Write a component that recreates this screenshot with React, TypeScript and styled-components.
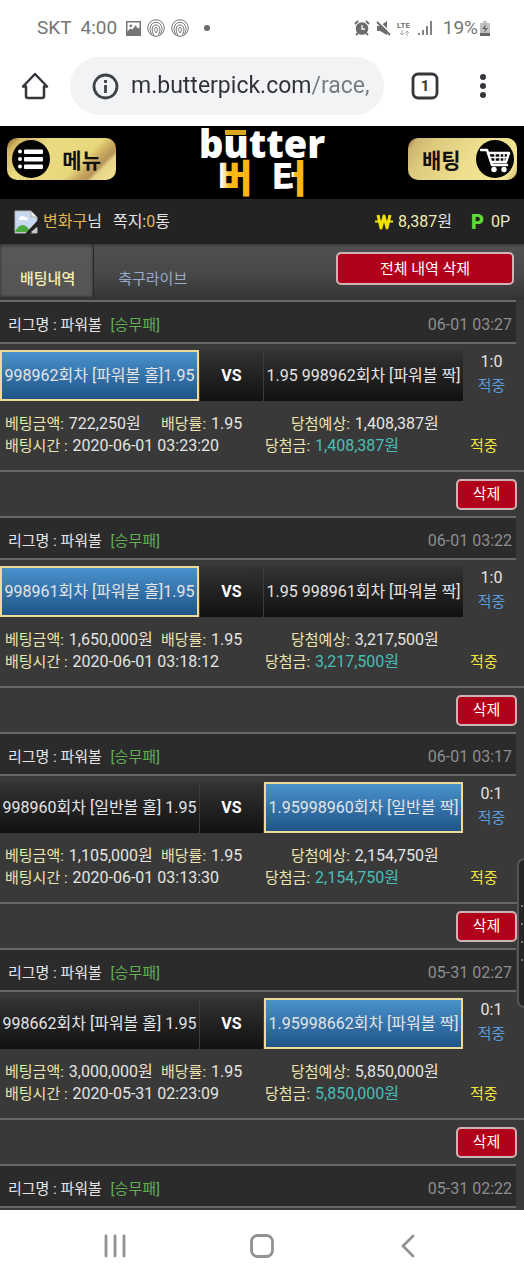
import React from "react";
import styled, { createGlobalStyle, css } from "styled-components";

const GlobalStyle = createGlobalStyle`
  * { box-sizing: border-box; }
  body {
    margin: 0;
    background: #393939;
    font-family: Roboto, "Noto Sans CJK KR", sans-serif;
    font-size: 16px;
    line-height: 22px;
    color: #e4e4e4;
  }
  button { font-family: inherit; cursor: pointer; padding: 0; border: 0; background: none; }
  a { text-decoration: none; color: inherit; }
  svg { display: block; flex: none; }
`;

const Page = styled.div`
  display: flex;
  flex-direction: column;
  min-height: 100vh;
  position: relative;
  overflow-x: hidden;
`;

const StatusBar = styled.div`
  display: flex;
  justify-content: space-between;
  align-items: center;
  height: 56px;
  padding: 0 34px 0 37px;
  background: #fff;
  color: #757575;
  font-size: 19px;
`;

const StatusGroup = styled.div<{ $gap: number }>`
  display: flex;
  align-items: center;
  gap: ${(p) => p.$gap}px;
`;

const StatusText = styled.span<{ $space?: number }>`
  margin-right: ${(p) => p.$space ?? 0}px;
`;

const BrowserBar = styled.div`
  display: flex;
  align-items: center;
  height: 70px;
  padding: 0 37px 10px 20px;
  background: #fff;
`;

const IconButton = styled.button`
  display: flex;
  align-items: center;
  justify-content: center;
  height: 44px;
`;

const AddressBox = styled.label`
  flex: 1;
  min-width: 0;
  display: flex;
  align-items: center;
  gap: 12px;
  height: 58px;
  margin: 0 27px 0 20px;
  padding: 0 12px 0 22px;
  border-radius: 29px;
  background: #f1f3f5;
`;

const AddressInput = styled.input`
  flex: 1;
  min-width: 0;
  height: 36px;
  padding: 0;
  border: 0;
  outline: 0;
  font: 23px/36px Roboto, sans-serif;
  color: #2f3135;
  background: linear-gradient(to right, #2f3135 181px, #777a7e 181px);
  background-clip: text;
  -webkit-background-clip: text;
  -webkit-text-fill-color: transparent;
`;

const MoreButton = styled(IconButton)`
  margin-left: 40px;
`;

const SiteHeader = styled.header`
  display: flex;
  align-items: flex-start;
  justify-content: space-between;
  height: 73px;
  padding: 0 7px;
  background: #000;
`;

const GoldButton = styled.button<{ $flip?: boolean }>`
  display: flex;
  align-items: center;
  justify-content: space-between;
  width: 109px;
  height: 42px;
  margin-top: 12px;
  padding: ${(p) => (p.$flip ? "0 3px 0 14px" : "0 15px 0 5px")};
  border-radius: 10px;
  color: #111;
  font-size: 21px;
  font-weight: 700;
  background: ${(p) =>
    p.$flip
      ? "linear-gradient(125deg, #7d5a2c 0%, #cdb472 7%, #dcc97c 20%, #eddf8e 55%, #f3e594 90%, #c9ae60 100%)"
      : "linear-gradient(135deg, #8b642e 0%, #d3b766 10%, #eadb82 30%, #e8d87d 64%, #c9a75c 74%, #b8935a 80%, #e6d488 84%, #f3e594 100%)"};
`;

const LogoLink = styled.a`
  svg { overflow: visible; }
`;

const UserBar = styled.div`
  display: flex;
  align-items: center;
  justify-content: space-between;
  height: 45px;
  padding: 0 14px;
  background: #232323;
`;

const UserGroup = styled.div`
  display: flex;
  align-items: center;
  gap: 5px;
`;

const Message = styled.a`
  margin-left: 6px;
`;

const Gold = styled.span`
  color: #e3b44c;
`;

const Cream = styled.span`
  color: #f2ecb4;
`;

const Badge = styled.span<{ $color: string }>`
  font-size: 20px;
  font-weight: 900;
  color: ${(p) => p.$color};
`;

const Points = styled.span`
  display: flex;
  align-items: center;
  gap: 7px;
  margin-left: 14px;
`;

const TabBar = styled.nav`
  display: flex;
  align-items: flex-start;
  height: 56px;
  padding-right: 10px;
  background: linear-gradient(#383838 0, #4f4f4f 3px, #484848 30px, #333 100%);
`;

const Tab = styled.a<{ $active?: boolean }>`
  height: 53px;
  padding: 24px 18px 0 20px;
  font-size: 15px;
  color: #99a9c9;
  ${(p) =>
    p.$active
      ? css`
          color: #f6f0b0;
          font-weight: 500;
          background: linear-gradient(#4a4a4a, #585858 6px, #545454);
          box-shadow: inset 0 0 3px #262626;
          border-right: 1px solid #292929;
        `
      : css`
          padding-left: 24px;
        `}
`;

const RedButton = styled.button<{ $wide?: boolean }>`
  width: ${(p) => (p.$wide ? 178 : 61)}px;
  height: ${(p) => (p.$wide ? 33 : 31)}px;
  margin: ${(p) => (p.$wide ? "8px 0 0 auto" : "0")};
  border: 2px solid #cfb3b5;
  border-radius: 5px;
  background: #b1001a;
  color: #fff;
  font-size: 15px;
  line-height: 20px;
`;

const BetList = styled.main`
  flex: 1;
  background: #393939;
`;

const BetCard = styled.article``;

const LeagueBar = styled.div`
  display: flex;
  align-items: center;
  justify-content: space-between;
  height: 44px;
  margin-right: 8px;
  padding: 6px 4px 0 8px;
  border-top: 2px solid #686868;
  border-bottom: 2px solid #686868;
  background: #2b2b2b;
  font-size: 15px;
`;

const Market = styled.span`
  margin-left: 5px;
  color: #62ad56;
`;

const MatchTime = styled.time`
  font-size: 16px;
  color: #8d8d8d;
`;

const MatchRow = styled.div`
  display: grid;
  grid-template-columns: 199fr 65fr 199fr 57fr;
  height: 51px;
  margin: 6px 4px 0 0;
  text-align: center;
`;

const Team = styled.div<{ $picked: boolean }>`
  display: flex;
  align-items: center;
  justify-content: center;
  white-space: pre;
  border: 2px solid transparent;
  background: linear-gradient(#333, #111);
  background-origin: border-box;
  ${(p) =>
    p.$picked &&
    css`
      border-color: #eadb9a;
      background: linear-gradient(#4a92ce, #1e5486);
    `}
`;

const Versus = styled.div`
  display: flex;
  align-items: center;
  justify-content: center;
  border-right: 1px solid #3c3c3c;
  border-left: 1px solid #3c3c3c;
  background: linear-gradient(#333, #111);
  color: #fff;
  font-weight: 700;
`;

const Score = styled.div`
  line-height: 24px;
`;

const Won = styled.span<{ $color: string }>`
  display: block;
  font-size: 15px;
  color: ${(p) => p.$color};
`;

const Details = styled.dl`
  height: 69px;
  margin: 0;
  padding: 12px 4px 0 5px;
`;

const DetailLine = styled.div<{ $columns: string }>`
  display: grid;
  grid-template-columns: ${(p) => p.$columns};
  white-space: nowrap;
`;

const Pair = styled.div`
  display: flex;
  gap: 5px;
`;

const Term = styled.dt`
  font-size: 15px;
  color: #ece4ab;
`;

const Value = styled.dd<{ $teal?: boolean }>`
  margin: 0;
  color: ${(p) => (p.$teal ? "#48bfb6" : "#e4e4e4")};
`;

const ActionRow = styled.div`
  display: flex;
  align-items: center;
  justify-content: flex-end;
  height: 46px;
  padding-right: 7px;
  border-top: 2px solid #686868;
`;

const EdgeHandle = styled.div`
  position: absolute;
  top: 858px;
  right: 0;
  display: flex;
  flex-direction: column;
  align-items: center;
  justify-content: center;
  gap: 16px;
  width: 7px;
  height: 150px;
  border: 2px solid #555;
  border-right: 0;
  border-radius: 7px 0 0 7px;
  background: #252525;
`;

const HandleDot = styled.i`
  width: 2px;
  height: 2px;
  background: #777;
`;

const SystemNav = styled.nav`
  display: flex;
  align-items: center;
  justify-content: space-between;
  height: 70px;
  padding: 2px 104px 0 103px;
  background: #fff;
`;

const NavButton = styled(IconButton)`
  width: 24px;
`;

const Fingerprint = () => (
  <svg width="18" height="18" viewBox="0 0 18 18" fill="none" stroke="#757575" strokeWidth="1">
    <circle cx="9" cy="9" r="8.300" />
    <path d="M5 15.500C1.500 11 3 3.300 9 3.300s7.500 7.200 4.300 12M7 16.500C4 11.500 5 6 9 6s5 5 2.600 10M9 14c-2-3.500-1.800-5.500 0-5.500s1.800 2.500.5 5.500" />
  </svg>
);

const PictureIcon = () => (
  <svg width="15" height="15" viewBox="0 0 14 14">
    <rect x=".7" y=".7" width="12.600" height="12.600" fill="none" stroke="#757575" strokeWidth="1.400" />
    <circle cx="4.500" cy="4.500" r="1.300" fill="#757575" />
    <path d="M1 10l3-3 2 1 3-4 2 3 2-1v7H1z" fill="#757575" />
  </svg>
);

const AlarmIcon = () => (
  <svg width="16" height="16" viewBox="0 0 16 16" fill="none" stroke="#6c6c6c">
    <circle cx="8" cy="8.500" r="6.300" fill="#6c6c6c" stroke="none" />
    <path d="M1 4l3-3M15 4l-3-3M4 13l-2 2M12 13l2 2" strokeWidth="1.800" />
    <path d="M8 5v4h3" stroke="#fff" strokeWidth="1.300" />
  </svg>
);

const MuteIcon = () => (
  <svg width="15" height="15" viewBox="0 0 15 15">
    <path d="M1 5h3l7-5v14l-7-4H1z" fill="#6c6c6c" />
    <path d="M1 -1l14 13" stroke="#fff" strokeWidth="1.500" />
    <path d="M1 1l13 13" stroke="#6c6c6c" strokeWidth="2" />
  </svg>
);

const LteIcon = () => (
  <svg width="15" height="17" viewBox="0 0 15 17">
    <text x="0" y="8" fontFamily="Roboto, sans-serif" fontSize="8" fontWeight="700" fill="#757575">LTE</text>
    <path d="M5 10v5M3 13l2 2 2-2M10 16v-5M8 13l2-2 2 2" fill="none" stroke="#aaa" />
  </svg>
);

const SignalIcon = () => (
  <svg width="14" height="14" viewBox="0 0 14 14" stroke="#757575" strokeWidth="1.800">
    <path d="M1 14v-2M5 14V9M9 14V5M13 14V0" />
  </svg>
);

const BatteryIcon = () => (
  <svg width="10" height="15" viewBox="0 0 10 15">
    <path d="M3 0h4v2h3v13H0V2h3z" fill="#c2c2c2" />
    <path d="M0 12h10v3H0z" fill="#666" />
    <path d="M6 3L2 8h3l-1 4 4-5H5z" fill="#666" />
  </svg>
);

const HomeIcon = () => (
  <svg width="30" height="30" viewBox="0 0 30 30" fill="none" stroke="#34373b" strokeWidth="2.500" strokeLinejoin="round" strokeLinecap="round">
    <path d="M3 15.500L15 3l12 12.500M3 15.500h3V25q0 2 2 2h14q2 0 2-2v-9.500h3" />
  </svg>
);

const InfoIcon = () => (
  <svg width="27" height="27" viewBox="0 0 27 27" fill="none" stroke="#3f4246" strokeWidth="2.800">
    <circle cx="13.500" cy="13.500" r="11.500" />
    <path d="M13.500 12v8M13.500 7v3" />
  </svg>
);

const TabsIcon = () => (
  <svg width="28" height="28" viewBox="0 0 28 28">
    <rect x="2" y="2" width="24" height="24" rx="5" fill="none" stroke="#34373b" strokeWidth="2.800" />
    <text x="14" y="19" textAnchor="middle" fontFamily="Roboto, sans-serif" fontSize="15" fontWeight="700" fill="#34373b">1</text>
  </svg>
);

const DotsIcon = () => (
  <svg width="8" height="26" viewBox="0 0 8 26" fill="#34373b">
    <circle cx="4" cy="4" r="3" />
    <circle cx="4" cy="13" r="3" />
    <circle cx="4" cy="22" r="3" />
  </svg>
);

const MenuIcon = () => (
  <svg width="38" height="38" viewBox="0 0 38 38">
    <circle cx="19" cy="19" r="19" fill="#050505" />
    <g fill="#fff">
      <circle cx="8" cy="11.500" r="2" />
      <circle cx="8" cy="19" r="2" />
      <circle cx="8" cy="26.500" r="2" />
      <rect x="12" y="9.500" width="19" height="4.500" rx="1" />
      <rect x="12" y="17" width="19" height="4.500" rx="1" />
      <rect x="12" y="24.500" width="19" height="4.500" rx="1" />
    </g>
  </svg>
);

const CartIcon = () => (
  <svg width="38" height="38" viewBox="0 0 38 38">
    <circle cx="19" cy="19" r="19" fill="#050505" />
    <g fill="none" stroke="#fff" strokeWidth="2.400" strokeLinejoin="round" strokeLinecap="round">
      <path d="M5 10h6l5 15h15M12 13h21l-3 9H15" />
      <path d="M14 17.500h17M19 13v9M24 13v9M28 13v9" strokeWidth="1.400" />
    </g>
    <circle cx="18" cy="29.500" r="2.700" fill="#fff" />
    <circle cx="28" cy="29.500" r="2.700" fill="#fff" />
  </svg>
);

const Logo = () => (
  <svg width="130" height="73" viewBox="0 0 130 73" role="img" aria-label="butter 버터">
    <defs>
      <linearGradient id="left" x1="0" x2="1">
        <stop offset=".1" stopColor="#fff" />
        <stop offset=".35" stopColor="#fbb815" />
      </linearGradient>
      <linearGradient id="right" x1="0" x2="1">
        <stop offset=".62" stopColor="#fff" />
        <stop offset=".66" stopColor="#fbb815" />
      </linearGradient>
    </defs>
    <text x="65" y="32" textAnchor="middle" fontFamily="'Open Sans', sans-serif" fontSize="38" fontWeight="800" fill="#fff">butter</text>
    <rect x="28" y="4" width="21" height="5" fill="#dba520" />
    <g fontFamily="'Noto Sans CJK KR', sans-serif" fontSize="38" fontWeight="900" textAnchor="middle">
      <text x="38" y="66" fill="url(#left)">버</text>
      <text x="92" y="66" fill="url(#right)">터</text>
    </g>
  </svg>
);

const BrokenImage = () => (
  <svg width="24" height="24" viewBox="0 0 24 24">
    <path d="M1 1h16l6 6v16H1z" fill="#c9d9f2" stroke="#b5b5b5" />
    <path d="M17 1v6h6z" fill="#f5f5f5" stroke="#aaa" />
    <path d="M5 10a3 3 0 0 1 5-3 3 3 0 0 1 4 3z" fill="#fff" />
    <path d="M1 22c3-7 8-9 12-5l4 5z" fill="#4da83e" />
    <path d="M24 10L11 24h5l8-7z" fill="#232323" />
    <path d="M17 22l6-5v6z" fill="#c8c8c8" />
  </svg>
);

const WonMark = () => (
  <svg width="18" height="16" viewBox="0 0 18 16" fill="none" stroke="#f0e400" role="img" aria-label="Won">
    <path d="M3 1l3 13 3-12 3 12 3-13" strokeWidth="3" strokeLinejoin="round" />
    <path d="M0 7.500h18" strokeWidth="2" />
  </svg>
);

const RecentsIcon = () => (
  <svg width="22" height="24" viewBox="0 0 22 24" stroke="#929292" strokeWidth="2.800" strokeLinecap="round">
    <path d="M2 2v20M11 2v20M20 2v20" />
  </svg>
);

const SquareIcon = () => (
  <svg width="24" height="24" viewBox="0 0 24 24">
    <rect x="1.500" y="1.500" width="21" height="21" rx="6" fill="none" stroke="#929292" strokeWidth="2.800" />
  </svg>
);

const BackIcon = () => (
  <svg width="14" height="24" viewBox="0 0 14 24" fill="none" stroke="#929292" strokeWidth="2.800" strokeLinecap="round" strokeLinejoin="round">
    <path d="M12 2L2 12l10 10" />
  </svg>
);

type Bet = {
  time: string;
  home: string;
  away: string;
  pick: "home" | "away";
  score: string;
  stake: string;
  placed: string;
  payout: string;
};

const bets: Bet[] = [
  { time: "06-01 03:27", home: "998962회차 [파워볼 홀]1.95", away: "1.95 998962회차 [파워볼 짝]", pick: "home", score: "1:0", stake: "722,250원", placed: "2020-06-01 03:23:20", payout: "1,408,387원" },
  { time: "06-01 03:22", home: "998961회차 [파워볼 홀]1.95", away: "1.95 998961회차 [파워볼 짝]", pick: "home", score: "1:0", stake: "1,650,000원", placed: "2020-06-01 03:18:12", payout: "3,217,500원" },
  { time: "06-01 03:17", home: "998960회차 [일반볼 홀] 1.95", away: "1.95998960회차 [일반볼 짝]", pick: "away", score: "0:1", stake: "1,105,000원", placed: "2020-06-01 03:13:30", payout: "2,154,750원" },
  { time: "05-31 02:27", home: "998662회차 [파워볼 홀] 1.95", away: "1.95998662회차 [파워볼 짝]", pick: "away", score: "0:1", stake: "3,000,000원", placed: "2020-05-31 02:23:09", payout: "5,850,000원" },
];

const League = ({ time }: { time: string }) => (
  <LeagueBar>
    <span>
      리그명 : 파워볼 <Market>[승무패]</Market>
    </span>
    <MatchTime>{time}</MatchTime>
  </LeagueBar>
);

const Detail = ({ label, value, teal }: { label: string; value: string; teal?: boolean }) => (
  <Pair>
    <Term>{label}</Term>
    <Value $teal={teal}>{value}</Value>
  </Pair>
);

const BetEntry = ({ bet }: { bet: Bet }) => (
  <BetCard>
    <League time={bet.time} />
    <MatchRow>
      <Team $picked={bet.pick === "home"}>{bet.home}</Team>
      <Versus>VS</Versus>
      <Team $picked={bet.pick === "away"}>{bet.away}</Team>
      <Score>
        {bet.score}
        <Won $color="#5b9bd8">적중</Won>
      </Score>
    </MatchRow>
    <Details>
      <DetailLine $columns="156fr 130fr 229fr">
        <Detail label="베팅금액:" value={bet.stake} />
        <Detail label="배당률:" value="1.95" />
        <Detail label="당첨예상:" value={bet.payout} />
      </DetailLine>
      <DetailLine $columns="260fr 205fr 50fr">
        <Detail label="배팅시간 :" value={bet.placed} />
        <Detail label="당첨금:" value={bet.payout} teal />
        <Won $color="#f0e53c">적중</Won>
      </DetailLine>
    </Details>
    <ActionRow>
      <RedButton type="button">삭제</RedButton>
    </ActionRow>
  </BetCard>
);

export default function App() {
  return (
    <Page>
      <GlobalStyle />
      <StatusBar>
        <StatusGroup $gap={6}>
          <StatusText $space={3}>SKT</StatusText>
          <StatusText $space={3}>4:00</StatusText>
          <PictureIcon />
          <Fingerprint />
          <Fingerprint />
          <svg width="20" height="6" viewBox="0 0 20 6" fill="#6a6a6a">
            <circle cx="12" cy="3" r="3" />
          </svg>
        </StatusGroup>
        <StatusGroup $gap={6}>
          <AlarmIcon />
          <MuteIcon />
          <LteIcon />
          <SignalIcon />
          <StatusText $space={-4}>&nbsp;19%</StatusText>
          <BatteryIcon />
        </StatusGroup>
      </StatusBar>
      <BrowserBar>
        <IconButton type="button" aria-label="Home"><HomeIcon /></IconButton>
        <AddressBox>
          <InfoIcon />
          <AddressInput type="text" aria-label="Address" defaultValue="m.butterpick.com/race," />
        </AddressBox>
        <IconButton type="button" aria-label="Tabs"><TabsIcon /></IconButton>
        <MoreButton type="button" aria-label="More"><DotsIcon /></MoreButton>
      </BrowserBar>
      <SiteHeader>
        <GoldButton type="button"><MenuIcon />메뉴</GoldButton>
        <LogoLink href="#"><Logo /></LogoLink>
        <GoldButton type="button" $flip>배팅<CartIcon /></GoldButton>
      </SiteHeader>
      <UserBar>
        <UserGroup>
          <BrokenImage />
          <span><Gold>변화구</Gold>님</span>
          <Message href="#">쪽지:<Gold>0</Gold>통</Message>
        </UserGroup>
        <UserGroup>
          <WonMark />
          <span><Cream>8,387</Cream>원</span>
          <Points>
            <Badge $color="#5fdc38">P</Badge>
            <span><Cream>0</Cream>P</span>
          </Points>
        </UserGroup>
      </UserBar>
      <TabBar>
        <Tab href="#" $active>배팅내역</Tab>
        <Tab href="#">축구라이브</Tab>
        <RedButton type="button" $wide>전체 내역 삭제</RedButton>
      </TabBar>
      <BetList>
        {bets.map((bet) => (
          <BetEntry key={bet.placed} bet={bet} />
        ))}
        <League time="05-31 02:22" />
      </BetList>
      <EdgeHandle>
        <HandleDot /><HandleDot /><HandleDot /><HandleDot />
      </EdgeHandle>
      <SystemNav>
        <NavButton type="button" aria-label="Recent apps"><RecentsIcon /></NavButton>
        <NavButton type="button" aria-label="Home screen"><SquareIcon /></NavButton>
        <NavButton type="button" aria-label="Back"><BackIcon /></NavButton>
      </SystemNav>
    </Page>
  );
}
